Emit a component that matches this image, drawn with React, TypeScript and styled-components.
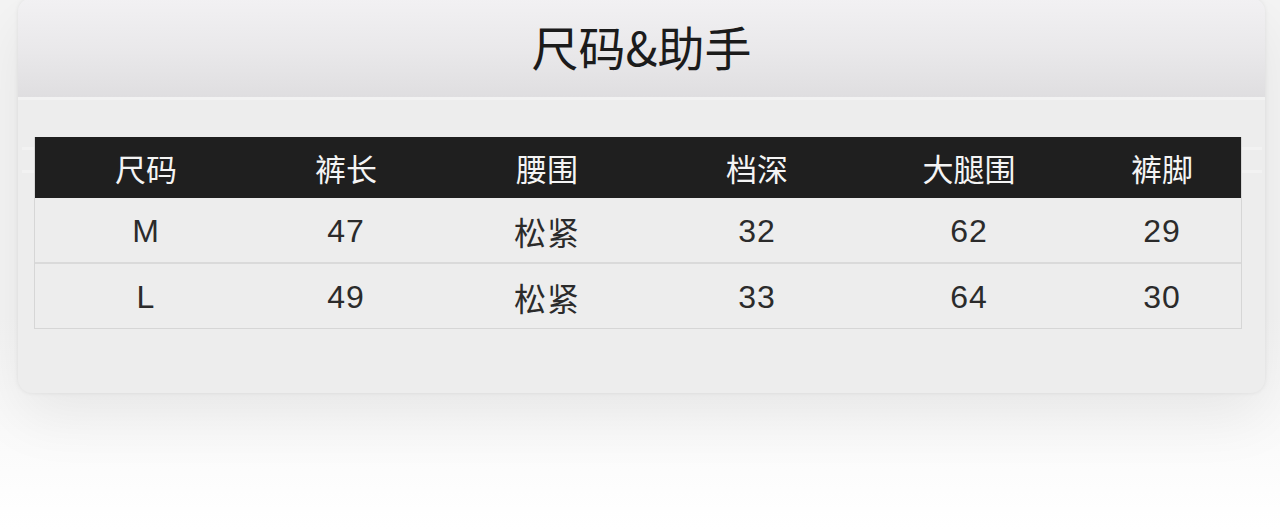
import React from 'react';
import styled, { createGlobalStyle } from 'styled-components';

const GlobalStyle = createGlobalStyle`
  html, body {
    margin: 0;
    padding: 0;
    background: #ffffff;
  }
  body {
    font-family: 'Liberation Sans', 'Noto Sans CJK SC', sans-serif;
  }
`;

const Page = styled.div`
  width: 1280px;
  height: 529px;
  overflow: hidden;
  padding: 0 15px 0 18px;
  box-sizing: border-box;
  background: linear-gradient(180deg, #f4f4f4 0%, #f4f4f4 60%, #ffffff 100%);
`;

const Card = styled.div`
  margin-top: -2px;
  height: 395px;
  border-radius: 14px;
  background: #ededed;
  box-shadow: 0 24px 60px rgba(0, 0, 0, 0.07), 0 0 4px rgba(0, 0, 0, 0.08);
  overflow: hidden;
  display: flex;
  flex-direction: column;
`;

const Header = styled.div`
  height: 102px;
  flex: none;
  background: linear-gradient(180deg, #f2f1f3 0%, #e9e8ea 55%, #dfdee0 100%);
  border-bottom: 3px solid #f2f2f2;
  display: flex;
  align-items: center;
  justify-content: center;
  padding-bottom: 4px;
  box-sizing: border-box;
`;

const Title = styled.h1`
  margin: 0;
  font-family: 'Noto Sans CJK SC', sans-serif;
  font-weight: 400;
  font-size: 47px;
  color: #1b1b1b;
`;

const Body = styled.div`
  position: relative;
  padding: 37px 23px 0 16px;

  /* faint guide lines that peek out on both sides of the table header */
  &::before,
  &::after {
    content: '';
    position: absolute;
    top: 47px;
    height: 26px;
    border-top: 3px solid #f2f2f2;
    border-bottom: 3px solid #f2f2f2;
    box-sizing: border-box;
  }
  &::before {
    left: 4px;
    width: 12px;
  }
  &::after {
    right: 3px;
    width: 20px;
  }
`;

const Table = styled.div`
  display: grid;
  grid-template-columns: 222px 178px 224px 196px 228px 1fr;
  border: 1px solid #d6d6d6;
  border-top: none;
`;

const HeadCell = styled.div`
  height: 61px;
  background: #1f1f1f;
  color: #f4f4f4;
  font-family: 'Noto Sans CJK SC', sans-serif;
  font-size: 31px;
  display: flex;
  align-items: center;
  justify-content: center;
`;

const Cell = styled.div<{ $last?: boolean }>`
  height: ${(p) => (p.$last ? '64px' : '66px')};
  border-bottom: ${(p) => (p.$last ? 'none' : '2px solid #dadada')};
  box-sizing: border-box;
  display: flex;
  align-items: center;
  justify-content: center;
  font-family: 'Liberation Sans', 'Noto Sans CJK SC', sans-serif;
  font-size: 32px;
  letter-spacing: 1px;
  color: #2b2b2b;
  padding-top: 2px;
`;

const headers = ['尺码', '裤长', '腰围', '档深', '大腿围', '裤脚'];
const rows = [
  ['M', '47', '松紧', '32', '62', '29'],
  ['L', '49', '松紧', '33', '64', '30'],
];

const App: React.FC = () => {
  return (
    <>
      <GlobalStyle />
      <Page>
        <Card>
          <Header>
            <Title>尺码&amp;助手</Title>
          </Header>
          <Body>
            <Table>
              {headers.map((h) => (
                <HeadCell key={h}>{h}</HeadCell>
              ))}
              {rows.map((row, i) =>
                row.map((v, j) => (
                  <Cell key={`${i}-${j}`} $last={i === rows.length - 1}>
                    {v}
                  </Cell>
                )),
              )}
            </Table>
          </Body>
        </Card>
      </Page>
    </>
  );
};

export default App;
